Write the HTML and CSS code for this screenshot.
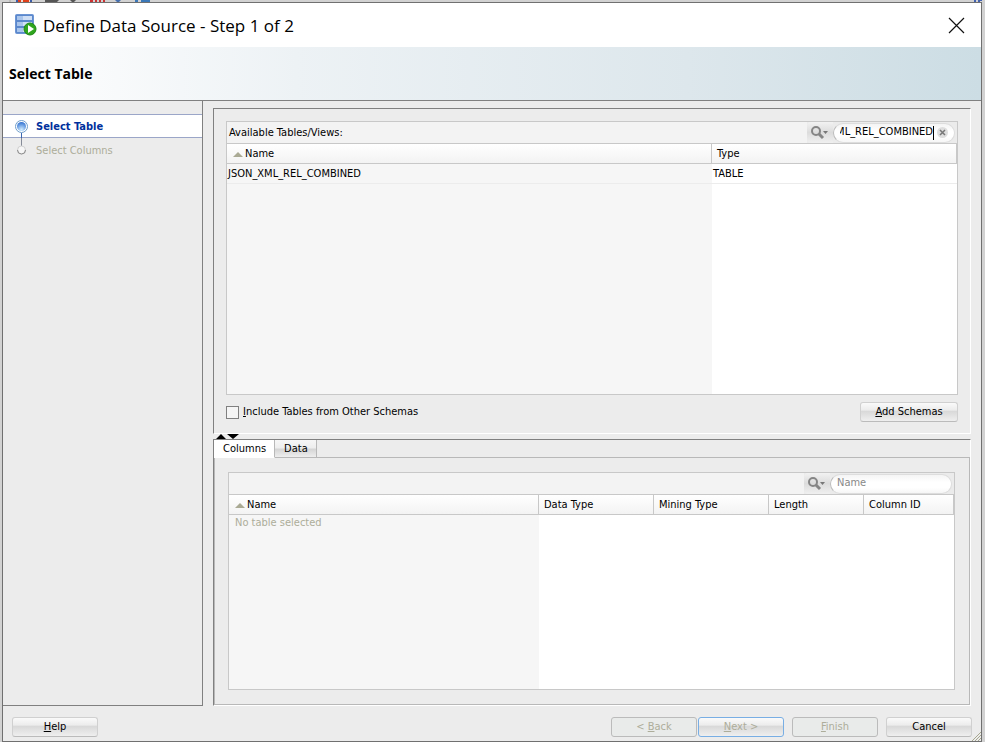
FILE: index.html
```
<!DOCTYPE html>
<html lang="en">
<head>
<meta charset="utf-8">
<title>Define Data Source</title>
<link rel="stylesheet" href="styles.css">
<script src="app.js" defer></script>
</head>
<body>
<div class="strip" aria-hidden="true">
  <svg width="160" height="3" viewBox="0 0 160 3">
    <path d="M8 0v3" stroke="#aaa"/>
    <path d="M14 0h16v3H14z" fill="#3b5ca8"/><path d="M16 0h12v2H16z" fill="#f0d8d0"/><path d="M16 0h3v2h-3zM21 0h6v2h-6z" fill="#e0401a"/>
    <path d="M43 0h14l-3 3H43z" fill="#555"/><path d="M68 0h6l-3 3z" fill="#555"/>
    <path d="M88 0h3v3h-3zM93 0h2v3h-2zM97 0h2v3h-2zM101 0h2v3h-2z" fill="#c33"/>
    <path d="M113 0h6l-3 3z" fill="#456fae"/><path d="M133 0h3v3h-3zM139 0h9v3h-9z" fill="#3b78b8"/>
  </svg>
  <svg width="8" height="3" viewBox="0 0 8 3"><path d="M0 0h2v3H0zM4 0h4v1H6v2H4z" fill="#4262b0"/></svg>
</div>
<main class="dialog">
  <header class="titlebar">
    <svg class="logo" width="22" height="22" viewBox="0 0 22 22">
      <rect x=".5" y=".5" width="18" height="19" rx="1" fill="#5b88cc" stroke="#6c95d4"/>
      <path d="M2 2h6v4H2zM2 8h6v4H2zM2 14h6v4H2z" fill="#a9c5ec"/>
      <path d="M8 2h9v4H8zM8 8h9v4H8zM8 14h9v4H8z" fill="#cfdff5"/>
      <circle cx="15" cy="15" r="6" fill="#2fa51d" stroke="#1d8713"/>
      <path d="M13 11l6 4-6 4z" fill="#fff"/>
    </svg>
    <h1 class="title">Define Data Source - Step 1 of 2</h1>
    <button class="close" aria-label="Close"><svg width="17" height="17" viewBox="0 0 17 17"><path d="M1 1l15 15M16 1L1 16" stroke="#111" stroke-width="1.2"/></svg></button>
  </header>
  <div class="banner"><h2>Select Table</h2></div>
  <div class="body">
    <nav class="steps">
      <ol>
        <li class="step current"><svg width="15" height="24" viewBox="0 0 15 24"><defs><radialGradient id="dot" cx=".5" cy=".85" r=".8"><stop offset="0" stop-color="#d4efff"/><stop offset="1" stop-color="#3978d4"/></radialGradient></defs><circle cx="7.500" cy="12.500" r="6" fill="#fff" stroke="#6f9ecb"/><circle cx="7.500" cy="12.500" r="4.500" fill="url(#dot)"/><path d="M7.500 19v5" stroke="#3a66b0"/></svg><span>Select Table</span></li>
        <li class="step"><svg width="15" height="24" viewBox="0 0 15 24"><path d="M7.500 0v8" stroke="#858b98"/><circle cx="7.500" cy="12" r="4" fill="#f6f6f6" stroke="#d0d0d0"/><path d="M3.500 12a4 4 0 1 0 8 0" fill="none" stroke="#8c8c8c"/></svg><span>Select Columns</span></li>
      </ol>
    </nav>
    <div class="content">
      <section class="upper">
        <div class="grid tables">
          <div class="toolbar">
            <span class="caption" id="cap">Available Tables/Views:</span>
            <div class="search">
              <button class="find" aria-label="Search options"><svg width="18" height="14" viewBox="0 0 18 14"><circle cx="5" cy="5" r="4" fill="none" stroke="#858585" stroke-width="2"/><path d="M8 8l4 4" stroke="#858585" stroke-width="3"/><path d="M12 5h5l-2.500 3z" fill="#777"/></svg></button>
              <div class="field"><input class="filter" id="q1" aria-label="Filter tables" value="JSON_XML_REL_COMBINED"><i class="caret"></i><button class="clear" aria-label="Clear"><svg width="11" height="11" viewBox="0 0 11 11"><circle cx="5.500" cy="5.500" r="5.500" fill="#dedede"/><path d="M3 3l5 5M8 3L3 8" stroke="#777" stroke-width="1.500"/></svg></button></div>
            </div>
          </div>
          <table aria-labelledby="cap">
            <colgroup><col><col class="c-type"></colgroup>
            <thead><tr><th><i class="sort"></i>Name</th><th>Type</th></tr></thead>
            <tbody><tr class="row"><td>JSON_XML_REL_COMBINED</td><td>TABLE</td></tr><tr class="rest"><td></td><td></td></tr></tbody>
          </table>
        </div>
        <div class="options">
          <label class="check"><input type="checkbox"><span><u>I</u>nclude Tables from Other Schemas</span></label>
          <button class="btn add"><u>A</u>dd Schemas</button>
        </div>
      </section>
      <div class="splitter" aria-hidden="true"><svg width="26" height="5" viewBox="0 0 26 5"><path d="M3 5l5-5 5 5zM14 0h12l-6 5z" fill="#000"/></svg></div>
      <section class="lower">
        <div class="tabs" role="tablist"><button class="tab on" role="tab" aria-selected="true">Columns</button><button class="tab" role="tab" aria-selected="false">Data</button></div>
        <div class="pane">
          <div class="grid">
            <div class="toolbar">
              <div class="search">
                <button class="find" aria-label="Search options"><svg width="18" height="14" viewBox="0 0 18 14"><circle cx="5" cy="5" r="4" fill="none" stroke="#858585" stroke-width="2"/><path d="M8 8l4 4" stroke="#858585" stroke-width="3"/><path d="M12 5h5l-2.500 3z" fill="#777"/></svg></button>
                <div class="field"><input class="filter wide" aria-label="Filter columns" placeholder="Name"></div>
              </div>
            </div>
            <table>
              <colgroup><col><col class="c-data"><col class="c-data"><col class="c-len"><col class="c-id"></colgroup>
              <thead><tr><th><i class="sort"></i>Name</th><th>Data Type</th><th>Mining Type</th><th>Length</th><th>Column ID</th></tr></thead>
              <tbody><tr class="none"><td>No table selected</td><td></td><td></td><td></td><td></td></tr></tbody>
            </table>
          </div>
        </div>
      </section>
    </div>
  </div>
  <footer class="footer">
    <button class="btn"><u>H</u>elp</button>
    <span class="space"></span>
    <button class="btn off" disabled>&lt; <u>B</u>ack</button>
    <button class="btn next" disabled><u>N</u>ext &gt;</button>
    <button class="btn off gap" disabled><u>F</u>inish</button>
    <button class="btn cancel">Cancel</button>
    <svg class="grip" width="9" height="9" viewBox="0 0 9 9"><path d="M0 9l9-9M3 9l6-6M6 9l3-3" stroke="#a8a890"/></svg>
  </footer>
</main>
</body>
</html>
```
FILE: app.js
```
// Keep the end of a long filter in view.
const filter = document.getElementById("q1");
filter.scrollLeft = filter.scrollWidth;
```
FILE: styles.css
```
* { box-sizing: border-box; }
html, body { height: 100%; margin: 0; }
body {
  display: flex;
  flex-direction: column;
  padding: 0 3px 0 2px;
  background: #d2d2d2;
  color: #000;
  font: 11px/14px "DejaVu Sans Condensed", "DejaVu Sans", sans-serif;
  overflow: hidden;
}
button, input { font: inherit; color: inherit; margin: 0; padding: 0; border: 0; background: none; }
.strip { display: flex; justify-content: space-between; height: 2px; overflow: hidden; }
.strip svg { flex: none; }
.dialog {
  flex: 1;
  min-height: 0;
  display: flex;
  flex-direction: column;
  border: 1px solid #707070;
  background: #ececec;
}
.titlebar { display: flex; align-items: center; height: 44px; padding: 0 16px 0 12px; background: #fff; }
.title { flex: 1; margin: 0 0 0 6px; padding-top: 2px; font: 17px/24px "Open Sans", sans-serif; }
.close { display: flex; }
.banner {
  display: flex;
  align-items: center;
  height: 54px;
  padding: 0 6px;
  border-bottom: 1px solid #808080;
  background: linear-gradient(90deg, #fff 0, #edf2f5 30%, #dde7ec 70%, #ccdde4 100%);
}
.banner h2 { margin: 0; font: bold 14px/18px "Open Sans", sans-serif; }
.body { flex: 1; min-height: 0; display: flex; }
.steps { width: 200px; padding-top: 13px; border: solid #808080; border-width: 0 1px 1px 0; }
.steps ol { list-style: none; margin: 0; padding: 0; }
.step { display: flex; align-items: center; gap: 7px; height: 24px; padding-left: 11px; color: #adad9a; }
.step.current { border: solid #9ba6c8; border-width: 1px 0; background: #fff; color: #00309c; font-weight: bold; }
.step svg { flex: none; }
.step span { padding-top: 2px; }
.content { flex: 1; min-width: 0; display: flex; flex-direction: column; padding: 7px 10px 0 10px; }
.upper {
  flex: 301 1 0;
  min-height: 0;
  display: flex;
  flex-direction: column;
  padding: 12px 12px 11px;
  border: 1px solid #808080;
  border-color: #808080 #fff #fff #808080;
}
.grid { flex: 1; min-width: 0; min-height: 0; display: flex; flex-direction: column; border: 1px solid #c8c8c8; background: #fff; }
.toolbar { display: flex; align-items: center; height: 22px; padding-left: 2px; background: #f3f3f3; border-bottom: 1px solid #c8c8c8; }
.search { display: flex; align-items: center; margin-left: auto; padding-right: 2px; background: #ebebeb; }
.find { display: flex; align-items: center; width: 26px; height: 21px; padding: 0 4px; background: linear-gradient(#f2f2f2, #dcdcdc 50%, #f0f0f0); border-radius: 4px 0 0 4px; }
.field { display: flex; align-items: center; height: 20px; padding: 0 6px; border: 1px solid #ddd; border-left-color: #bbb; border-radius: 10px; background: linear-gradient(#f4f4f4, #fff 40%, #fff 70%, #f6f6f6); }
.filter { width: 93px; height: 16px; padding-bottom: 2px; outline: 0; }
.filter.wide { width: 108px; }
.filter::placeholder { color: #888; opacity: 1; }
.caret { width: 1px; height: 14px; background: #000; }
.clear { display: flex; margin-left: 3px; }
table { flex: 1; width: 100%; height: 100%; border-collapse: separate; border-spacing: 0; table-layout: fixed; }
.c-type { width: 245px; }
.c-data { width: 115px; }
.c-len { width: 95px; }
.c-id { width: 90px; }
th { height: 20px; padding: 0 5px; text-align: left; font-weight: normal; border: solid #c8c8c8; border-width: 0 1px 1px 0; background: linear-gradient(#fff, #f3f3f3); }
.sort { display: inline-block; margin: 0 2px 0 1px; border: solid transparent; border-width: 0 5px 5px; border-bottom-color: #aaaa94; }
td { padding: 1px 1px 0; vertical-align: top; }
td:first-child { background: #f6f6f6; }
.row td { height: 19px; line-height: 18px; border-bottom: 1px solid #ececec; }
.none td { padding: 1px 6px 0; color: #adad9a; }
.options { display: flex; align-items: center; justify-content: space-between; height: 20px; margin-top: 7px; }
.check { display: flex; align-items: center; gap: 4px; }
.check input { appearance: none; width: 13px; height: 13px; border: 1px solid #808080; background: #f5f5f5; }
.btn { width: 86px; height: 20px; border: 1px solid #d0d0d0; border-bottom-color: #bbb; border-radius: 3px; background: linear-gradient(#fafafa 0, #ececec 40%, #d8d8d8 45%, #efefef 100%); }
.btn.add { width: 98px; }
.btn:disabled { color: #adad9a; }
.splitter { display: flex; height: 5px; }
.lower { flex: 265 1 0; min-height: 0; display: flex; flex-direction: column; border: 1px solid #808080; border-color: #808080 #fff #fff #808080; }
.tabs { display: flex; height: 18px; margin-bottom: -1px; position: relative; }
.tab { height: 18px; padding: 1px 8px 0 9px; border: solid #b8b8b8; border-width: 0 1px 1px 0; background: linear-gradient(#f6f6f6, #eee 45%, #d5d5d5 55%, #eee); }
.tab.on { background: #fff; border-bottom-color: #fff; }
.pane { flex: 1; min-height: 0; display: flex; padding: 14px 14px 14px 13px; border: 1px solid #b8b8b8; }
.footer { display: flex; align-items: center; height: 35px; padding: 6px 9px 0; position: relative; }
.space { flex: 1; }
.btn.off { background: #e9ebea; border-color: #bbb; }
.btn.next { margin-left: 1px; border-color: #78aee4; }
.btn.gap { margin-left: 8px; }
.btn.cancel { margin-left: 8px; }
.grip { position: absolute; right: 0; bottom: 0; }
```
